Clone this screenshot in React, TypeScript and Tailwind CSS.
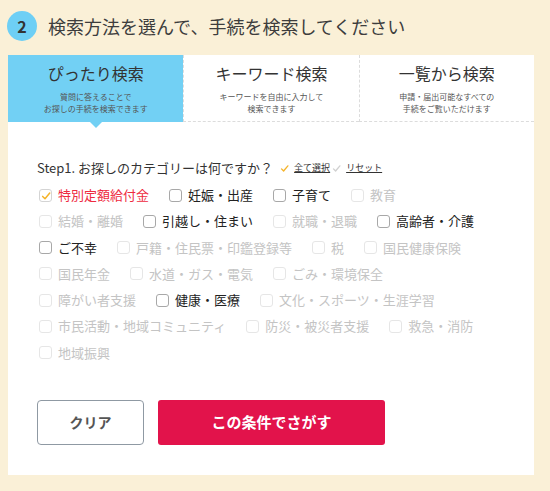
import React from 'react';

type ItemState = 'checked' | 'on' | 'off';

interface Category {
  label: string;
  state: ItemState;
}

const categories: Category[] = [
  { label: '特別定額給付金', state: 'checked' },
  { label: '妊娠・出産', state: 'on' },
  { label: '子育て', state: 'on' },
  { label: '教育', state: 'off' },
  { label: '結婚・離婚', state: 'off' },
  { label: '引越し・住まい', state: 'on' },
  { label: '就職・退職', state: 'off' },
  { label: '高齢者・介護', state: 'on' },
  { label: 'ご不幸', state: 'on' },
  { label: '戸籍・住民票・印鑑登録等', state: 'off' },
  { label: '税', state: 'off' },
  { label: '国民健康保険', state: 'off' },
  { label: '国民年金', state: 'off' },
  { label: '水道・ガス・電気', state: 'off' },
  { label: 'ごみ・環境保全', state: 'off' },
  { label: '障がい者支援', state: 'off' },
  { label: '健康・医療', state: 'on' },
  { label: '文化・スポーツ・生涯学習', state: 'off' },
  { label: '市民活動・地域コミュニティ', state: 'off' },
  { label: '防災・被災者支援', state: 'off' },
  { label: '救急・消防', state: 'off' },
  { label: '地域振興', state: 'off' },
];

const tabs = [
  { title: 'ぴったり検索', lines: ['質問に答えることで', 'お探しの手続を検索できます'] },
  { title: 'キーワード検索', lines: ['キーワードを自由に入力して', '検索できます'] },
  { title: '一覧から検索', lines: ['申請・届出可能なすべての', '手続をご覧いただけます'] },
];

const Check = ({ className }: { className?: string }) => (
  <svg viewBox="0 0 12 12" className={className} fill="none" stroke="currentColor" strokeWidth="1.8" strokeLinecap="round" strokeLinejoin="round">
    <path d="M2 6.5l2.8 2.8L10.5 2.5" />
  </svg>
);

const CategoryItem = ({ item }: { item: Category }) => {
  const box =
    item.state === 'off' ? 'border-[#e6e6e6]' : item.state === 'checked' ? 'border-[#d4d4d4]' : 'border-[#a8a8a8]';
  const text =
    item.state === 'checked' ? 'text-[#ee2b3f]' : item.state === 'on' ? 'text-[#222]' : 'text-[#c4c4c4]';

  return (
    <div className="flex items-center h-[26.25px] mr-[18px]">
      <span className={`relative ml-[2px] w-[13px] h-[13px] border rounded-[3px] bg-white ${box}`}>
        {item.state === 'checked' && <Check className="absolute left-[1px] top-[1px] w-[10px] h-[10px] text-[#f5b42a]" />}
      </span>
      <span className={`ml-[6px] text-[13px] leading-[26px] whitespace-nowrap ${text}`}>{item.label}</span>
    </div>
  );
};

export default function App() {
  return (
    <div className="w-[550px] h-[491px] overflow-hidden bg-[#faf0d7] font-['Noto_Sans_CJK_JP',sans-serif]">
      <div className="flex items-center pt-[11px] pl-[7px]">
        <div className="w-[30px] h-[30px] rounded-full bg-[#6ecff5] flex items-center justify-center text-[16px] font-bold text-[#333]">
          2
        </div>
        <h2 className="ml-[11px] text-[18px] leading-[30px] text-[#3d3d3d]">検索方法を選んで、手続を検索してください</h2>
      </div>

      <div className="mt-[14px] ml-[8px] w-[526px] bg-white">
        <div className="grid grid-cols-3 h-[67px]">
          {tabs.map((tab, i) => (
            <div
              key={tab.title}
              className={`relative flex flex-col items-center pt-[6px] ${
                i === 0 ? 'bg-[#72d0f4]' : 'border-b border-dashed border-[#dcdcdc]'
              } ${i > 0 ? 'border-l border-dashed border-l-[#dcdcdc]' : ''}`}
            >
              <div className="text-[16px] leading-[24px] text-[#333]">{tab.title}</div>
              <div className="mt-[6px] text-[8px] leading-[12px] text-[#555] text-center">
                {tab.lines.map((l) => (
                  <div key={l}>{l}</div>
                ))}
              </div>
              {i === 0 && (
                <span className="absolute left-1/2 -bottom-[6px] -translate-x-1/2 w-0 h-0 border-l-[6px] border-r-[6px] border-t-[6px] border-l-transparent border-r-transparent border-t-[#72d0f4]" />
              )}
            </div>
          ))}
        </div>

        <div className="pt-[36px] pl-[29px] pr-[27px] pb-[30px]">
          <div className="flex items-center h-[20px]">
            <span className="text-[13px] leading-[20px] text-[#333]">Step1. お探しのカテゴリーは何ですか？</span>
            <Check className="ml-[7px] w-[9px] h-[9px] text-[#f5b42a]" />
            <a className="ml-[5px] text-[9px] text-[#333] underline">全て選択</a>
            <Check className="ml-[2px] w-[9px] h-[9px] text-[#d0d0d0]" />
            <a className="ml-[5px] text-[9px] text-[#333] underline">リセット</a>
          </div>

          <div className="mt-[4px] flex flex-wrap">
            {categories.map((c) => (
              <CategoryItem key={c.label} item={c} />
            ))}
          </div>

          <div className="mt-[34px] flex">
            <button className="w-[107px] h-[45px] border border-[#8f99a3] rounded-[4px] bg-white text-[14px] font-bold text-[#555]">
              クリア
            </button>
            <button className="ml-[14px] w-[227px] h-[45px] rounded-[3px] bg-[#e2134b] text-[15px] font-bold text-white">
              この条件でさがす
            </button>
          </div>
        </div>
      </div>
    </div>
  );
}
